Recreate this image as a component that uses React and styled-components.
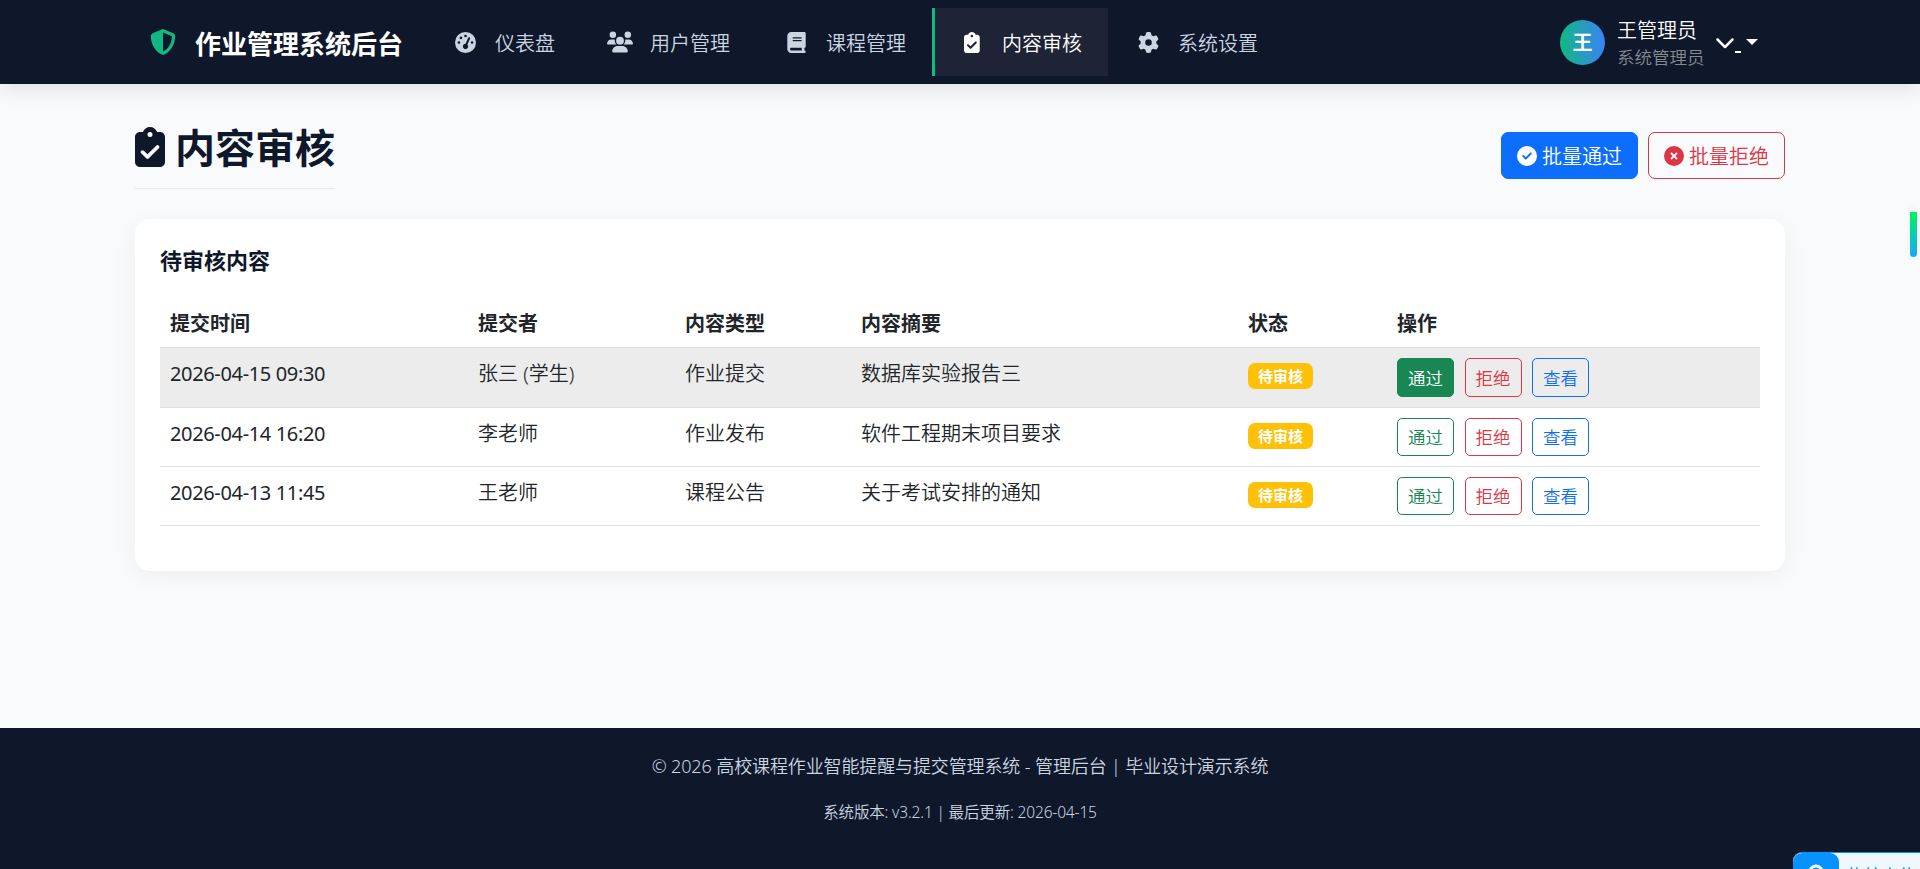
import React from "react"
import styled, { createGlobalStyle, css } from "styled-components"
import {
  FaGaugeHigh,
  FaUsers,
  FaBook,
  FaGear,
  FaCircleCheck,
  FaCircleXmark,
  FaChevronDown,
  FaShieldHalved,
} from "react-icons/fa6"

const navItems = [
  { label: "仪表盘", icon: "gauge", width: 155 },
  { label: "用户管理", icon: "users", width: 176 },
  { label: "课程管理", icon: "book", width: 176 },
  { label: "内容审核", icon: "clipboard", width: 176, active: true },
  { label: "系统设置", icon: "gear", width: 176 },
]

const rows = [
  { time: "2026-04-15 09:30", user: "张三 (学生)", type: "作业提交", summary: "数据库实验报告三", hover: true },
  { time: "2026-04-14 16:20", user: "李老师", type: "作业发布", summary: "软件工程期末项目要求" },
  { time: "2026-04-13 11:45", user: "王老师", type: "课程公告", summary: "关于考试安排的通知" },
]

function ClipboardIcon({ size }) {
  return (
    <svg height={size} viewBox="0 0 384 512" fill="currentColor">
      <path
        fillRule="evenodd"
        d="M192 0c-41.800 0-77.400 26.700-90.500 64H64C28.700 64 0 92.700 0 128v320c0 35.300 28.700 64 64 64h256c35.300 0 64-28.700 64-64V128c0-35.300-28.700-64-64-64h-37.500C269.400 26.700 233.800 0 192 0zm0 64a32 32 0 1 1 0 64 32 32 0 1 1 0-64zM305 273L177 401c-9.400 9.400-24.600 9.400-33.900 0l-64-64c-9.400-9.400-9.400-24.600 0-33.900s24.600-9.400 33.900 0l47 47L271 239c9.400-9.400 24.600-9.400 33.900 0s9.400 24.600 0 33.900z"
      />
    </svg>
  )
}

function NavIcon({ name }) {
  if (name === "gauge") return <FaGaugeHigh size={21} />
  if (name === "users") return <FaUsers size={26} />
  if (name === "book") return <FaBook size={21} />
  if (name === "gear") return <FaGear size={21} />
  return <ClipboardIcon size={21} />
}

export default function App() {
  return (
    <>
      <GlobalStyle />
      <Page>
        <Navbar>
          <Brand>
            <FaShieldHalved size={26} color="#10b981" />
            <BrandName>作业管理系统后台</BrandName>
          </Brand>
          <Nav>
            {navItems.map(item => (
              <NavLink key={item.label} $width={item.width} $active={item.active}>
                <IconBox><NavIcon name={item.icon} /></IconBox>
                <NavLabel>{item.label}</NavLabel>
              </NavLink>
            ))}
          </Nav>
          <User>
            <Avatar>王</Avatar>
            <UserText>
              <UserName>王管理员</UserName>
              <UserRole>系统管理员</UserRole>
            </UserText>
            <Toggle>
              <FaChevronDown size={20} />
              <Underline />
              <Caret />
            </Toggle>
          </User>
        </Navbar>

        <Main>
          <PageHead>
            <Title>
              <ClipboardIcon size={40} />
              内容审核
            </Title>
            <HeadActions>
              <ActionButton $primary><FaCircleCheck size={20} />批量通过</ActionButton>
              <ActionButton><FaCircleXmark size={20} />批量拒绝</ActionButton>
            </HeadActions>
          </PageHead>

          <Card>
            <CardTitle>待审核内容</CardTitle>
            <Table>
              <colgroup>
                <col width="308" />
                <col width="207" />
                <col width="176" />
                <col width="387" />
                <col width="149" />
                <col />
              </colgroup>
              <thead>
                <tr>
                  <Th>提交时间</Th>
                  <Th>提交者</Th>
                  <Th>内容类型</Th>
                  <Th>内容摘要</Th>
                  <Th>状态</Th>
                  <Th>操作</Th>
                </tr>
              </thead>
              <tbody>
                {rows.map(row => (
                  <Row key={row.time} $hover={row.hover}>
                    <Td><Time>{row.time}</Time></Td>
                    <Td>{row.user}</Td>
                    <Td>{row.type}</Td>
                    <Td>{row.summary}</Td>
                    <Td><Badge>待审核</Badge></Td>
                    <Td>
                      <RowActions $tall={row.hover}>
                        <SmallButton $color="#198754" $filled={row.hover}>通过</SmallButton>
                        <SmallButton $color="#dc3545">拒绝</SmallButton>
                        <SmallButton $color="#0d6efd">查看</SmallButton>
                      </RowActions>
                    </Td>
                  </Row>
                ))}
              </tbody>
            </Table>
          </Card>
        </Main>

        <Footer>
          <Copyright>© 2026 高校课程作业智能提醒与提交管理系统 - 管理后台 | 毕业设计演示系统</Copyright>
          <Version>系统版本: v3.2.1 | 最后更新: 2026-04-15</Version>
        </Footer>
      </Page>
      <ScrollMark />
      <FloatBar>
        <FloatIcon>
          <svg width="18" height="20" viewBox="0 0 18 20" fill="none" stroke="#fff" strokeWidth="3">
            <circle cx="9" cy="8" r="6" />
          </svg>
        </FloatIcon>
        <FloatText>拖拽上传</FloatText>
      </FloatBar>
    </>
  )
}

const GlobalStyle = createGlobalStyle`
  * {
    box-sizing: border-box;
  }
  body {
    margin: 0;
    overflow: hidden;
    background: #f8fafc;
    color: #212529;
    font-family: "Noto Sans", "Noto Sans CJK SC", sans-serif;
    font-size: 20px;
    font-weight: 350;
    line-height: 30px;
  }
  svg {
    display: block;
    flex: none;
  }
`

const Page = styled.div`
  display: flex;
  flex-direction: column;
  height: 869px;
`

const Navbar = styled.header`
  display: flex;
  align-items: center;
  flex: none;
  height: 84px;
  padding: 0 162px 0 150px;
  background: #0f172a;
  box-shadow: 0 5px 20px rgba(0, 0, 0, 0.1);
`

const Brand = styled.div`
  display: flex;
  align-items: center;
  gap: 19px;
  width: 275px;
  color: #fff;
  font-size: 26px;
  font-weight: 700;
  white-space: nowrap;
`

const BrandName = styled.span`
  padding-top: 3px;
`

const Nav = styled.nav`
  display: flex;
`

const NavLink = styled.a`
  display: flex;
  align-items: center;
  gap: 15px;
  width: ${p => p.$width}px;
  height: 68px;
  padding-left: 22px;
  border-left: 3px solid ${p => (p.$active ? "#10b981" : "transparent")};
  background: ${p => (p.$active ? "#1e2435" : "transparent")};
  color: ${p => (p.$active ? "#fff" : "#cbd5e1")};
  white-space: nowrap;
`

const NavLabel = styled.span`
  padding-top: 3px;
`

const IconBox = styled.span`
  display: flex;
  justify-content: center;
  width: 30px;
`

const User = styled.div`
  display: flex;
  align-items: center;
  margin-left: auto;
`

const Avatar = styled.div`
  display: flex;
  align-items: center;
  justify-content: center;
  width: 45px;
  height: 45px;
  margin-right: 12px;
  padding-top: 2px;
  border-radius: 50%;
  background: linear-gradient(90deg, #10b981, #3b82f6);
  color: #fff;
  font-weight: 700;
`

const UserText = styled.div`
  width: 88px;
  margin-right: 10px;
  padding-top: 3px;
  white-space: nowrap;
`

const UserName = styled.div`
  color: #fff;
  line-height: 28px;
`

const UserRole = styled.div`
  color: #868a91;
  font-size: 17.5px;
  line-height: 25px;
`

const Toggle = styled.div`
  display: flex;
  align-items: center;
  color: #fff;
`

const Underline = styled.span`
  width: 6px;
  height: 2px;
  margin: 19px 5px 0 0;
  background: #fff;
`

const Caret = styled.span`
  border-top: 6px solid #fff;
  border-right: 6px solid transparent;
  border-left: 6px solid transparent;
`

const Main = styled.main`
  flex: 1;
  padding: 40px 135px 0;
`

const PageHead = styled.div`
  display: flex;
  align-items: flex-start;
  justify-content: space-between;
  height: 65px;
  margin-bottom: 30px;
`

const Title = styled.h1`
  display: flex;
  align-items: flex-start;
  gap: 10px;
  height: 65px;
  margin: 0;
  padding-top: 3px;
  border-bottom: 1px solid #e2e8f0;
  color: #0f172a;
  font-size: 40px;
  font-weight: 700;
  line-height: 42px;
`

const HeadActions = styled.div`
  display: flex;
  gap: 10px;
  padding-top: 8px;
`

const buttonBase = css`
  display: flex;
  align-items: center;
  justify-content: center;
  font-family: inherit;
  font-weight: 350;
  white-space: nowrap;
`

const ActionButton = styled.button`
  ${buttonBase}
  gap: 5px;
  width: 137px;
  height: 47px;
  padding: 0;
  border: 1px solid ${p => (p.$primary ? "#0d6efd" : "#dc3545")};
  border-radius: 7px;
  background: ${p => (p.$primary ? "#0d6efd" : "transparent")};
  color: ${p => (p.$primary ? "#fff" : "#dc3545")};
  font-size: 20px;
`

const Card = styled.section`
  height: 352px;
  padding: 25px;
  border-radius: 15px;
  background: #fff;
  box-shadow: 0 5px 25px rgba(0, 0, 0, 0.05);
`

const CardTitle = styled.h2`
  margin: 0 0 23px;
  padding-top: 2px;
  color: #0f172a;
  font-size: 22px;
  font-weight: 700;
  line-height: 28px;
`

const Table = styled.table`
  width: 1600px;
  table-layout: fixed;
  border-collapse: collapse;
`

const Th = styled.th`
  height: 50px;
  padding: 5px 10px 0;
  border-bottom: 1px solid #dee2e6;
  font-weight: 700;
  text-align: left;
`

const Row = styled.tr`
  height: ${p => (p.$hover ? 60 : 59)}px;
  background: ${p => (p.$hover ? "#ececec" : "transparent")};
`

const Td = styled.td`
  padding: 11px 10px 0;
  border-bottom: 1px solid #dee2e6;
  vertical-align: top;
  white-space: nowrap;
`

const Time = styled.span`
  font-weight: 400;
  letter-spacing: -0.35px;
`

const Badge = styled.span`
  display: flex;
  align-items: center;
  justify-content: center;
  width: 65px;
  height: 26px;
  margin-top: 4px;
  border-radius: 7px;
  background: #ffc107;
  color: #fff;
  font-size: 15px;
  font-weight: 700;
`

const RowActions = styled.div`
  display: flex;
  gap: 10.5px;
  height: ${p => (p.$tall ? 39 : 38)}px;
  margin-top: -1px;
`

const SmallButton = styled.button`
  ${buttonBase}
  width: 57px;
  padding: 0;
  border: 1px solid ${p => p.$color};
  border-radius: 5px;
  background: ${p => (p.$filled ? p.$color : "transparent")};
  color: ${p => (p.$filled ? "#fff" : p.$color)};
  font-size: 17.5px;
`

const Footer = styled.footer`
  flex: none;
  height: 141px;
  padding-top: 23px;
  background: #0f172a;
  color: #cbd5e1;
  text-align: center;
`

const Copyright = styled.p`
  margin: 0 0 18px;
  font-size: 18px;
  letter-spacing: -0.12px;
`

const Version = styled.p`
  margin: 0;
  font-size: 15.5px;
  letter-spacing: -0.15px;
  line-height: 26px;
`

// page position marker pinned at the window edge
const ScrollMark = styled.div`
  position: fixed;
  top: 212px;
  right: 3px;
  width: 7px;
  height: 45px;
  border-radius: 0 0 4px 4px;
  background: linear-gradient(#00f260, #15a9fa);
  box-shadow: 0 -6px 6px rgba(0, 0, 0, 0.04);
`

const FloatBar = styled.div`
  position: fixed;
  right: 0;
  bottom: 0;
  display: flex;
  width: 127px;
  height: 17px;
  border-top: 1px solid #0693ff;
  border-radius: 9px 0 0 0;
  background: #f0f8ff;
  overflow: hidden;
`

const FloatIcon = styled.div`
  display: flex;
  justify-content: center;
  align-items: flex-start;
  width: 46px;
  height: 40px;
  padding-top: 11px;
  border-radius: 9px 9px 0 0;
  background: #0693ff;
`

const FloatText = styled.span`
  padding: 11px 0 0 9px;
  color: #0693ff;
  font-size: 17px;
  font-weight: 500;
  line-height: 24px;
  white-space: nowrap;
`
